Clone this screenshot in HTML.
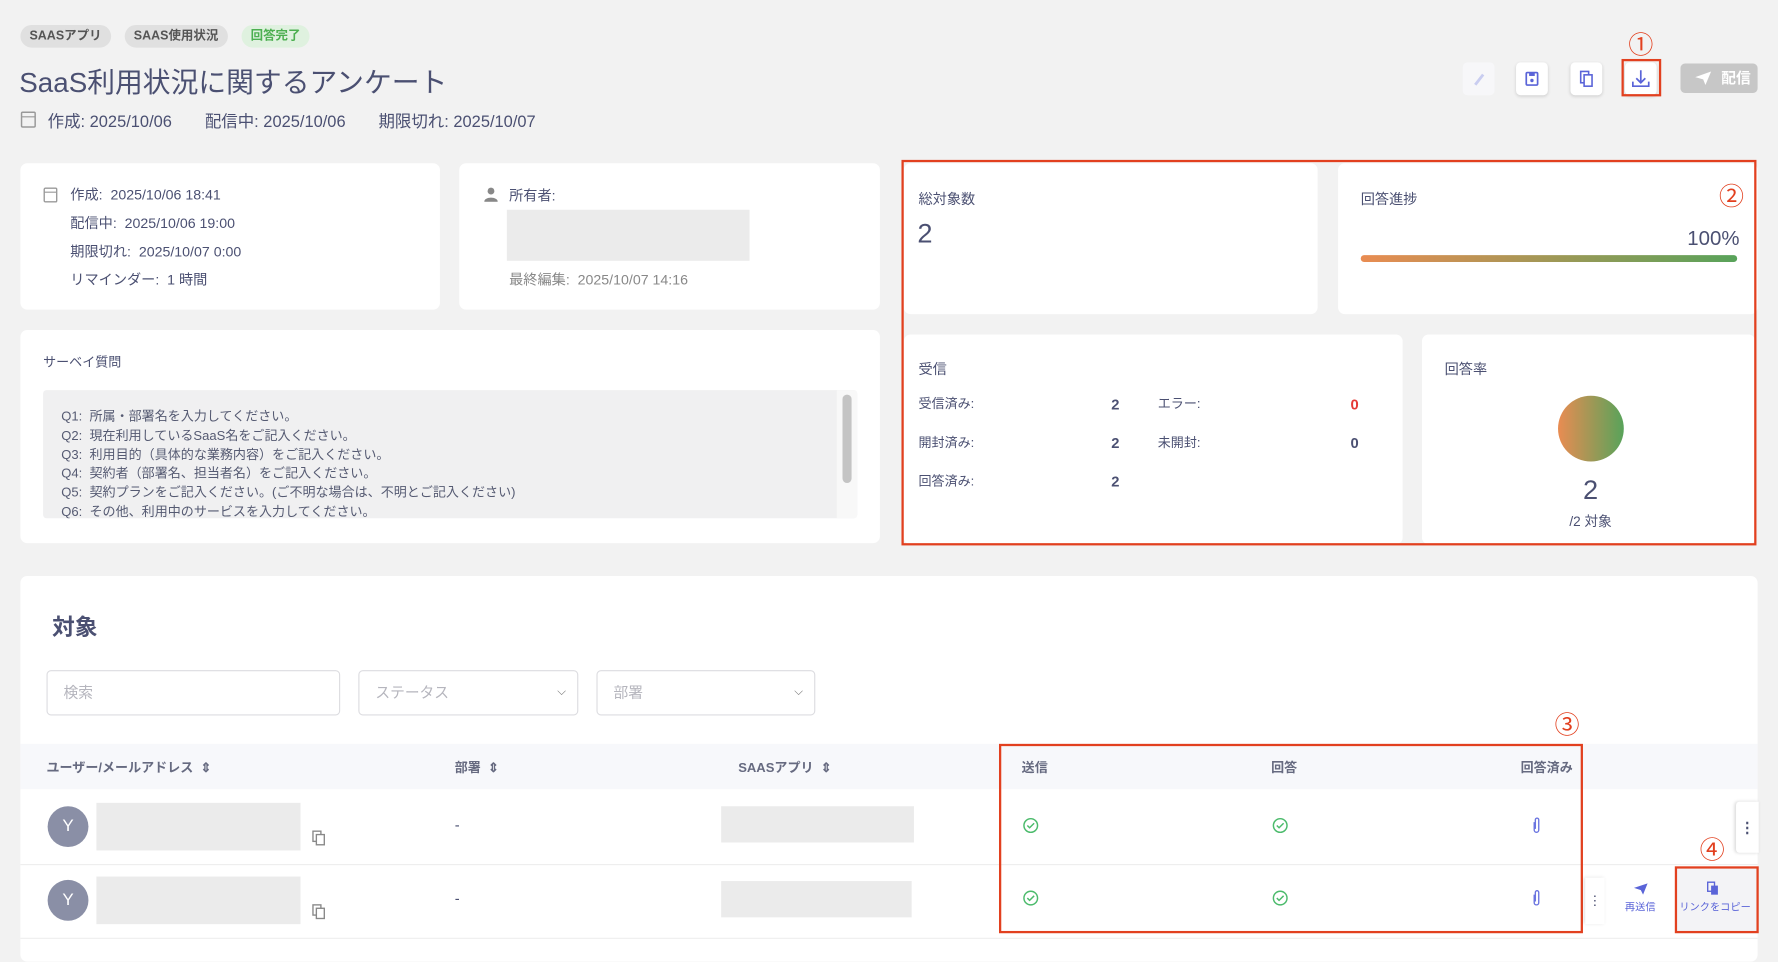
<!DOCTYPE html>
<html><head><meta charset="utf-8"><style>
*{box-sizing:border-box;margin:0;padding:0}
html,body{width:1778px;height:948px;overflow:hidden;background:#f2f2f2}
body{font-family:"Liberation Sans","Noto Sans CJK JP",sans-serif;color:#4b5072}
#w{position:absolute;left:0;top:0;width:1568px;height:836px;transform:scale(1.13393);transform-origin:0 0}
.a{position:absolute}
.card{position:absolute;background:#fff;border-radius:6px}
.tag{position:absolute;top:22px;height:20px;border-radius:10px;background:#e0e0e0;color:#555;font-size:11px;font-weight:bold;line-height:20px;padding:0 8px}
.btn{position:absolute;top:55px;width:28px;height:29px;background:#fff;border-radius:4px;box-shadow:0 1px 3px rgba(0,0,0,.15)}
.red{position:absolute;border:2px solid #e2401f}
.rn{position:absolute;color:#e2401f;font-size:22px}
.s13{font-size:12.5px}
.ph{position:absolute;background:#ebebeb}
.inp{position:absolute;top:591px;height:40px;border:1px solid #dcdce0;border-radius:4px;font-size:13px;color:#b5b5bd;line-height:38px;padding-left:14px}
.th{position:absolute;top:669px;font-size:11.5px;font-weight:bold;color:#666a80}
.av{position:absolute;left:42px;width:36px;height:36px;border-radius:50%;background:#8a8fa6;color:#fff;text-align:center;line-height:36px;font-size:15px}
</style></head><body><div id="w">
<div class="tag" style="left:18px">SAASアプリ</div>
<div class="tag" style="left:110px">SAAS使用状況</div>
<div class="tag" style="left:213px;background:#dff1df;color:#4caf50">回答完了</div>
<div class="a" style="left:17px;top:54px;font-size:24.5px;color:#4b5072">SaaS利用状況に関するアンケート</div>
<svg class="a" style="left:18px;top:97px" width="14" height="16" viewBox="0 0 14 16"><rect x="1" y="2" width="12" height="13" rx="1" fill="none" stroke="#999" stroke-width="1.3"/><line x1="1" y1="6" x2="13" y2="6" stroke="#999"/></svg>
<div class="a" style="left:42px;top:96px;font-size:14.5px;white-space:nowrap"><span>作成: 2025/10/06</span><span style="margin-left:29px">配信中: 2025/10/06</span><span style="margin-left:29px">期限切れ: 2025/10/07</span></div>

<div class="btn" style="left:1290px;box-shadow:none;background:#f7f7f9"><svg width="28" height="29"><path d="M10 19l7-9 2 1.5-7 9z" fill="#c9cdf0"/></svg></div>
<div class="btn" style="left:1337px"><svg width="28" height="29"><rect x="9" y="9" width="10" height="11" rx="1" fill="none" stroke="#5a64d8" stroke-width="1.5"/><rect x="11.5" y="9" width="5" height="3" fill="#5a64d8"/><circle cx="14" cy="16" r="1.5" fill="#5a64d8"/></svg></div>
<div class="btn" style="left:1385px"><svg width="28" height="29"><rect x="9" y="8" width="7" height="10" fill="none" stroke="#5a64d8" stroke-width="1.4"/><rect x="12" y="11" width="7" height="10" fill="#fff" stroke="#5a64d8" stroke-width="1.4"/></svg></div>
<div class="btn" style="left:1433px"><svg width="28" height="29"><path d="M14 7v11M10 14l4 4 4-4M7 17v4h14v-4" fill="none" stroke="#5a64d8" stroke-width="1.5"/></svg></div>
<div class="red" style="left:1430px;top:52px;width:35px;height:33px"></div>
<div class="rn" style="left:1436px;top:22px">①</div>
<div class="a" style="left:1482px;top:56px;width:68px;height:26px;background:#c7c7c7;border-radius:4px;color:#fff;font-size:13px;font-weight:bold;line-height:26px;padding-left:36px"><svg class="a" style="left:12px;top:6px" width="16" height="14"><path d="M1 6L15 1 10 13 8 8z" fill="#fff"/></svg>配信</div>

<div class="card" style="left:18px;top:144px;width:370px;height:129px"></div>
<svg class="a" style="left:38px;top:164px" width="13" height="15"><rect x="1" y="2" width="11" height="12" rx="1" fill="none" stroke="#999" stroke-width="1.2"/><line x1="1" y1="5.5" x2="12" y2="5.5" stroke="#999"/></svg>
<div class="a s13" style="left:62px;top:160px;line-height:25px">作成: &nbsp;2025/10/06 18:41<br>配信中: &nbsp;2025/10/06 19:00<br>期限切れ: &nbsp;2025/10/07 0:00<br>リマインダー: &nbsp;1 時間</div>
<div class="card" style="left:405px;top:144px;width:371px;height:129px"></div>
<svg class="a" style="left:427px;top:165px" width="12" height="13"><circle cx="6" cy="3.5" r="3" fill="#888"/><path d="M0 13c0-5 12-5 12 0z" fill="#888"/></svg>
<div class="a s13" style="left:449px;top:162px">所有者:</div>
<div class="ph" style="left:447px;top:185px;width:214px;height:45px"></div>
<div class="a s13" style="left:449px;top:236px;color:#888">最終編集: &nbsp;2025/10/07 14:16</div>

<div class="card" style="left:18px;top:291px;width:758px;height:188px"></div>
<div class="a" style="left:38px;top:311px;font-size:11.5px">サーベイ質問</div>
<div class="a" style="left:38px;top:344px;width:718px;height:113px;background:#f0f0f1;border-radius:3px;overflow:hidden">
<div style="position:absolute;right:0;top:0;width:18px;height:113px;background:#f8f8f8"></div>
<div style="position:absolute;right:5px;top:4px;width:8px;height:78px;background:#c4c4c4;border-radius:4px"></div>
<div style="position:absolute;left:16px;top:16px;font-size:11.5px;line-height:16.8px;color:#555a72">Q1: &nbsp;所属・部署名を入力してください。<br>Q2: &nbsp;現在利用しているSaaS名をご記入ください。<br>Q3: &nbsp;利用目的（具体的な業務内容）をご記入ください。<br>Q4: &nbsp;契約者（部署名、担当者名）をご記入ください。<br>Q5: &nbsp;契約プランをご記入ください。(ご不明な場合は、不明とご記入ください)<br>Q6: &nbsp;その他、利用中のサービスを入力してください。</div></div>

<div class="card" style="left:797px;top:144px;width:365px;height:133px"></div>
<div class="a s13" style="left:810px;top:165px">総対象数</div>
<div class="a" style="left:809px;top:193px;font-size:24px">2</div>
<div class="card" style="left:1180px;top:144px;width:370px;height:133px"></div>
<div class="a s13" style="left:1200px;top:165px">回答進捗</div>
<div class="a" style="left:1488px;top:200px;font-size:18px">100%</div>
<div class="a" style="left:1200px;top:225px;width:332px;height:6px;border-radius:3px;background:linear-gradient(90deg,#e98c52,#58a35a)"></div>
<div class="card" style="left:797px;top:295px;width:440px;height:185px"></div>
<div class="a s13" style="left:810px;top:315px">受信</div>
<div class="a" style="left:810px;top:340px;font-size:11.5px;line-height:34px">受信済み:<br>開封済み:<br>回答済み:</div>
<div class="a" style="left:980px;top:340px;font-size:13px;line-height:34px;font-weight:bold">2<br>2<br>2</div>
<div class="a" style="left:1021px;top:340px;font-size:11.5px;line-height:34px">エラー:<br>未開封:</div>
<div class="a" style="left:1191px;top:340px;font-size:13px;line-height:34px;font-weight:bold"><span style="color:#e53935">0</span><br>0</div>
<div class="card" style="left:1254px;top:295px;width:294px;height:185px"></div>
<div class="a s13" style="left:1274px;top:315px">回答率</div>
<div class="a" style="left:1374px;top:349px;width:58px;height:58px;border-radius:50%;background:linear-gradient(90deg,#e98c52,#58a35a)"></div>
<div class="a" style="left:1396px;top:419px;font-size:24px">2</div>
<div class="a" style="left:1384px;top:451px;font-size:12px">/2 対象</div>
<div class="red" style="left:795px;top:141px;width:754px;height:340px"></div>
<div class="rn" style="left:1516px;top:156px">②</div>

<div class="card" style="left:18px;top:508px;width:1532px;height:340px"></div>
<div class="a" style="left:46px;top:537px;font-size:20px;font-weight:bold">対象</div>
<div class="inp" style="left:41px;width:259px">検索</div>
<div class="inp" style="left:316px;width:194px">ステータス<span style="position:absolute;right:10px;top:0;font-size:10px;color:#777">⌵</span></div>
<div class="inp" style="left:526px;width:193px">部署<span style="position:absolute;right:10px;top:0;font-size:10px;color:#777">⌵</span></div>
<div class="a" style="left:18px;top:656px;width:1532px;height:40px;background:#f7f8fb"></div>
<div class="th" style="left:41px">ユーザー/メールアドレス &nbsp;⇕</div>
<div class="th" style="left:401px">部署 &nbsp;⇕</div>
<div class="th" style="left:651px">SAASアプリ &nbsp;⇕</div>
<div class="th" style="left:901px">送信</div>
<div class="th" style="left:1121px">回答</div>
<div class="th" style="left:1341px">回答済み</div>
<div class="a" style="left:18px;top:762px;width:1532px;height:1px;background:#eee"></div>
<div class="a" style="left:18px;top:827px;width:1532px;height:1px;background:#eee"></div>

<div class="av" style="top:711px">Y</div>
<div class="ph" style="left:85px;top:708px;width:180px;height:42px"></div>
<div class="av" style="top:776px">Y</div>
<div class="ph" style="left:85px;top:773px;width:180px;height:42px"></div>
<svg class="a" style="left:275px;top:732px" width="14" height="15"><rect x="1" y="1" width="7" height="9" fill="none" stroke="#888" stroke-width="1.2"/><rect x="4" y="4" width="7" height="9" fill="#fff" stroke="#888" stroke-width="1.2"/></svg>
<svg class="a" style="left:275px;top:797px" width="14" height="15"><rect x="1" y="1" width="7" height="9" fill="none" stroke="#888" stroke-width="1.2"/><rect x="4" y="4" width="7" height="9" fill="#fff" stroke="#888" stroke-width="1.2"/></svg>
<div class="a" style="left:401px;top:720px;font-size:13px">-</div>
<div class="a" style="left:401px;top:785px;font-size:13px">-</div>
<div class="ph" style="left:636px;top:711px;width:170px;height:32px"></div>
<div class="ph" style="left:636px;top:777px;width:168px;height:32px"></div>
<svg class="a" style="left:902px;top:721px" width="14" height="14"><circle cx="7" cy="7" r="6" fill="none" stroke="#4cbb6c" stroke-width="1.3"/><path d="M4 7l2 2 4-4" fill="none" stroke="#4cbb6c" stroke-width="1.3"/></svg>
<svg class="a" style="left:1122px;top:721px" width="14" height="14"><circle cx="7" cy="7" r="6" fill="none" stroke="#4cbb6c" stroke-width="1.3"/><path d="M4 7l2 2 4-4" fill="none" stroke="#4cbb6c" stroke-width="1.3"/></svg>
<svg class="a" style="left:902px;top:785px" width="14" height="14"><circle cx="7" cy="7" r="6" fill="none" stroke="#4cbb6c" stroke-width="1.3"/><path d="M4 7l2 2 4-4" fill="none" stroke="#4cbb6c" stroke-width="1.3"/></svg>
<svg class="a" style="left:1122px;top:785px" width="14" height="14"><circle cx="7" cy="7" r="6" fill="none" stroke="#4cbb6c" stroke-width="1.3"/><path d="M4 7l2 2 4-4" fill="none" stroke="#4cbb6c" stroke-width="1.3"/></svg>
<svg class="a" style="left:1350px;top:720px" width="10" height="16"><path d="M3 5v7a2 2 0 004 0V3a1.5 1.5 0 00-3 0v8" fill="none" stroke="#6a74e0" stroke-width="1.2"/></svg>
<svg class="a" style="left:1350px;top:784px" width="10" height="16"><path d="M3 5v7a2 2 0 004 0V3a1.5 1.5 0 00-3 0v8" fill="none" stroke="#6a74e0" stroke-width="1.2"/></svg>
<div class="red" style="left:881px;top:656px;width:515px;height:167px"></div>
<div class="rn" style="left:1371px;top:622px">③</div>

<div class="a" style="left:1531px;top:707px;width:20px;height:45px;background:#fff;box-shadow:-1px 0 3px rgba(0,0,0,.15);border-radius:3px 0 0 3px;font-size:13px;text-align:center;line-height:45px;font-weight:bold">⋮</div>
<div class="a" style="left:1398px;top:774px;width:17px;height:41px;background:#fff;box-shadow:-1px 0 3px rgba(0,0,0,.12);font-size:12px;text-align:center;line-height:41px">⋮</div>
<svg class="a" style="left:1440px;top:778px" width="14" height="12"><path d="M1 5L13 1 9 11 7 7z" fill="#5a64d8"/></svg>
<div class="a" style="left:1433px;top:793px;font-size:9px;color:#5a64d8">再送信</div>
<div class="a" style="left:1478px;top:765px;width:72px;height:57px;background:#f3f3f6"></div>
<svg class="a" style="left:1505px;top:777px" width="12" height="14"><rect x="1" y="1" width="6" height="8" fill="none" stroke="#5a64d8" stroke-width="1.2"/><rect x="4" y="4" width="6" height="8" fill="#5a64d8"/></svg>
<div class="a" style="left:1481px;top:793px;font-size:9px;color:#5a64d8">リンクをコピー</div>
<div class="red" style="left:1477px;top:764px;width:74px;height:59px"></div>
<div class="rn" style="left:1499px;top:732px">④</div>
</div></body></html>
